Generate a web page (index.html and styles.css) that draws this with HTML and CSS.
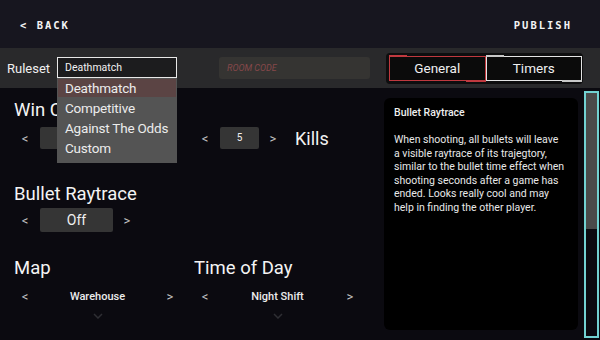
FILE: index.html
```html
<!DOCTYPE html>
<html>
<head>
<meta charset="utf-8">
<link rel="stylesheet" href="styles.css">
</head>
<body>
<div class="app">
  <header class="topbar">
    <span class="nav">&lt; BACK</span>
    <span class="nav">PUBLISH</span>
  </header>
  <div class="toolbar">
    <span class="label">Ruleset</span>
    <div class="select-wrap">
      <div class="select">Deathmatch</div>
      <ul class="menu">
        <li class="active">Deathmatch</li>
        <li>Competitive</li>
        <li>Against The Odds</li>
        <li>Custom</li>
      </ul>
    </div>
    <div class="room">ROOM CODE</div>
    <div class="tabs">
      <div class="tab tab-general">General</div>
      <div class="tab tab-timers">Timers</div>
    </div>
  </div>
  <main class="main">
    <section class="settings">
      <div class="setting">
        <h2 class="heading">Win Condition</h2>
        <div class="controls">
          <div class="stepper">
            <span class="arrow">&lt;</span>
            <span class="box box-wide"></span>
            <span class="arrow arrow-hidden"></span>
          </div>
          <div class="stepper stepper-second">
            <span class="arrow">&lt;</span>
            <span class="box box-small">5</span>
            <span class="arrow">&gt;</span>
          </div>
          <span class="unit">Kills</span>
        </div>
      </div>
      <div class="setting setting-bullet">
        <h2 class="heading">Bullet Raytrace</h2>
        <div class="controls">
          <div class="stepper">
            <span class="arrow">&lt;</span>
            <span class="box box-wide box-off">Off</span>
            <span class="arrow">&gt;</span>
          </div>
        </div>
      </div>
      <div class="pair">
        <div class="setting col">
          <h2 class="heading">Map</h2>
          <div class="stepper">
            <span class="arrow">&lt;</span>
            <span class="choice">Warehouse</span>
            <span class="arrow">&gt;</span>
          </div>
          <svg class="chev" width="10" height="6" viewBox="0 0 10 6"><polyline points="1,1 5,5 9,1" fill="none" stroke="#2e2e33" stroke-width="1.5"/></svg>
        </div>
        <div class="setting col">
          <h2 class="heading">Time of Day</h2>
          <div class="stepper">
            <span class="arrow">&lt;</span>
            <span class="choice">Night Shift</span>
            <span class="arrow">&gt;</span>
          </div>
          <svg class="chev" width="10" height="6" viewBox="0 0 10 6"><polyline points="1,1 5,5 9,1" fill="none" stroke="#2e2e33" stroke-width="1.5"/></svg>
        </div>
      </div>
    </section>
    <aside class="info">
      <h3 class="info-title">Bullet Raytrace</h3>
      <p class="info-text">When shooting, all bullets will leave a visible raytrace of its trajegtory, similar to the bullet time effect when shooting seconds after a game has ended. Looks really cool and may help in finding the other player.</p>
    </aside>
    <div class="scrollbar"><div class="thumb"></div></div>
  </main>
</div>
</body>
</html>
```
FILE: styles.css
```css
* { box-sizing: border-box; }
html, body { margin: 0; padding: 0; }
body {
  width: 600px;
  height: 340px;
  overflow: hidden;
  background: #0b0a10;
  font-family: Roboto, "Noto Sans", sans-serif;
  color: #f2f2f2;
}
.app { display: flex; flex-direction: column; height: 340px; }

.topbar {
  height: 48px;
  background: #17161f;
  display: flex;
  align-items: center;
  justify-content: space-between;
  padding: 1px 28px 0 20px;
}
.nav {
  font-family: "DejaVu Sans Mono", monospace;
  font-weight: bold;
  font-size: 10.5px;
  letter-spacing: 2px;
  color: #f4f4f4;
}

.toolbar {
  height: 40px;
  background: #29292b;
  display: flex;
  align-items: center;
  padding-left: 7px;
}
.label { font-size: 13px; width: 50px; color: #f0f0f0; }
.select-wrap { position: relative; width: 120px; }
.select {
  height: 21px;
  border: 1px solid #e8e8e8;
  background: #1c1c1e;
  font-size: 10.5px;
  line-height: 19px;
  padding-left: 7px;
  margin-top: -1px;
}
.menu {
  position: absolute;
  top: 20px;
  left: 0;
  width: 120px;
  margin: 0;
  padding: 1px 1px 4px;
  list-style: none;
  background: #545454;
  z-index: 5;
}
.menu li {
  font-size: 13.5px;
  letter-spacing: -0.2px;
  height: 20px;
  line-height: 19px;
  padding-left: 7px;
  color: #ececec;
}
.menu li.active { background: #5b4444; height: 18px; line-height: 18px; margin-bottom: 2px; }

.room {
  margin-left: 42px;
  width: 151px;
  height: 22px;
  background: #353432;
  border-radius: 3px;
  font-size: 9px;
  font-style: italic;
  color: #86484a;
  line-height: 22px;
  padding-left: 8px;
}
.tabs {
  margin-left: 16px;
  width: 197px;
  height: 31px;
  background: #0e0e0f;
  border-radius: 4px;
  display: flex;
  align-items: center;
  padding: 0 1px 0 3px;
}
.tab {
  position: relative;
  flex: 1;
  height: 25px;
  font-size: 13.5px;
  line-height: 23px;
  text-align: center;
  color: #f0f0f0;
  background: #0b0b0b;
}
.tab-general { border: 1px solid #c0393f; }
.tab-timers { border: 1px solid #e4e4e4; }
.tab::before, .tab::after {
  content: "";
  position: absolute;
  height: 2px;
}
.tab::before { top: -2px; left: -1px; width: 18px; }
.tab::after { bottom: -2px; right: -1px; width: 20px; }
.tab-general::before, .tab-general::after { background: #c0393f; }
.tab-timers::before, .tab-timers::after { background: #c8c8c8; }

.main {
  flex: 1;
  display: flex;
  min-height: 0;
}
.settings {
  width: 384px;
  padding: 11px 0 0 14px;
  display: flex;
  flex-direction: column;
}
.heading {
  margin: 0;
  font-size: 18.5px;
  font-weight: 400;
  line-height: 22px;
  color: #f4f4f4;
}
.controls { display: flex; align-items: center; margin-top: 6px; margin-left: 2px; }
.stepper { display: flex; align-items: center; }
.stepper-second { margin-left: 60px; }
.arrow {
  width: 18px;
  text-align: center;
  font-size: 13px;
  color: #c4c4c4;
}
.box {
  height: 22px;
  background: #353535;
  border-radius: 2px;
  text-align: center;
  line-height: 22px;
  color: #f0f0f0;
  margin: 0 5px 0 6px;
}
.box-wide { width: 73px; font-size: 13px; }
.box-small { width: 39px; font-size: 10px; }
.box-off { height: 24px; line-height: 24px; font-size: 14px; }
.unit { margin-left: 13px; font-size: 18px; }

.setting-bullet { margin-top: 34px; }
.setting-bullet .controls { margin-top: 3px; }

.pair { display: flex; margin-top: 25px; }
.col { width: 180px; display: flex; flex-direction: column; }
.col .stepper { margin-left: 2px; margin-top: 10px; }
.choice {
  width: 127px;
  text-align: center;
  font-size: 11px;
  font-weight: 500;
  color: #ececec;
}
.chev { margin: 9px 0 0 79px; }

.info {
  width: 194px;
  margin: 10px 0 10px;
  background: #000;
  border-radius: 6px;
  padding: 8px 13px 6px 10px;
}
.info-title {
  margin: 0;
  font-size: 10.5px;
  font-weight: 500;
  line-height: 14px;
  color: #efefef;
}
.info-text {
  margin: 13px 0 0;
  font-size: 10.5px;
  line-height: 13.6px;
  color: #e8e8e8;
}
.scrollbar {
  width: 15px;
  margin: 3px 1px 2px 6px;
  border: 2px solid #72d2d2;
  background: #0b0a10;
}
.thumb { height: 136px; background: #4a4a4a; }
```
